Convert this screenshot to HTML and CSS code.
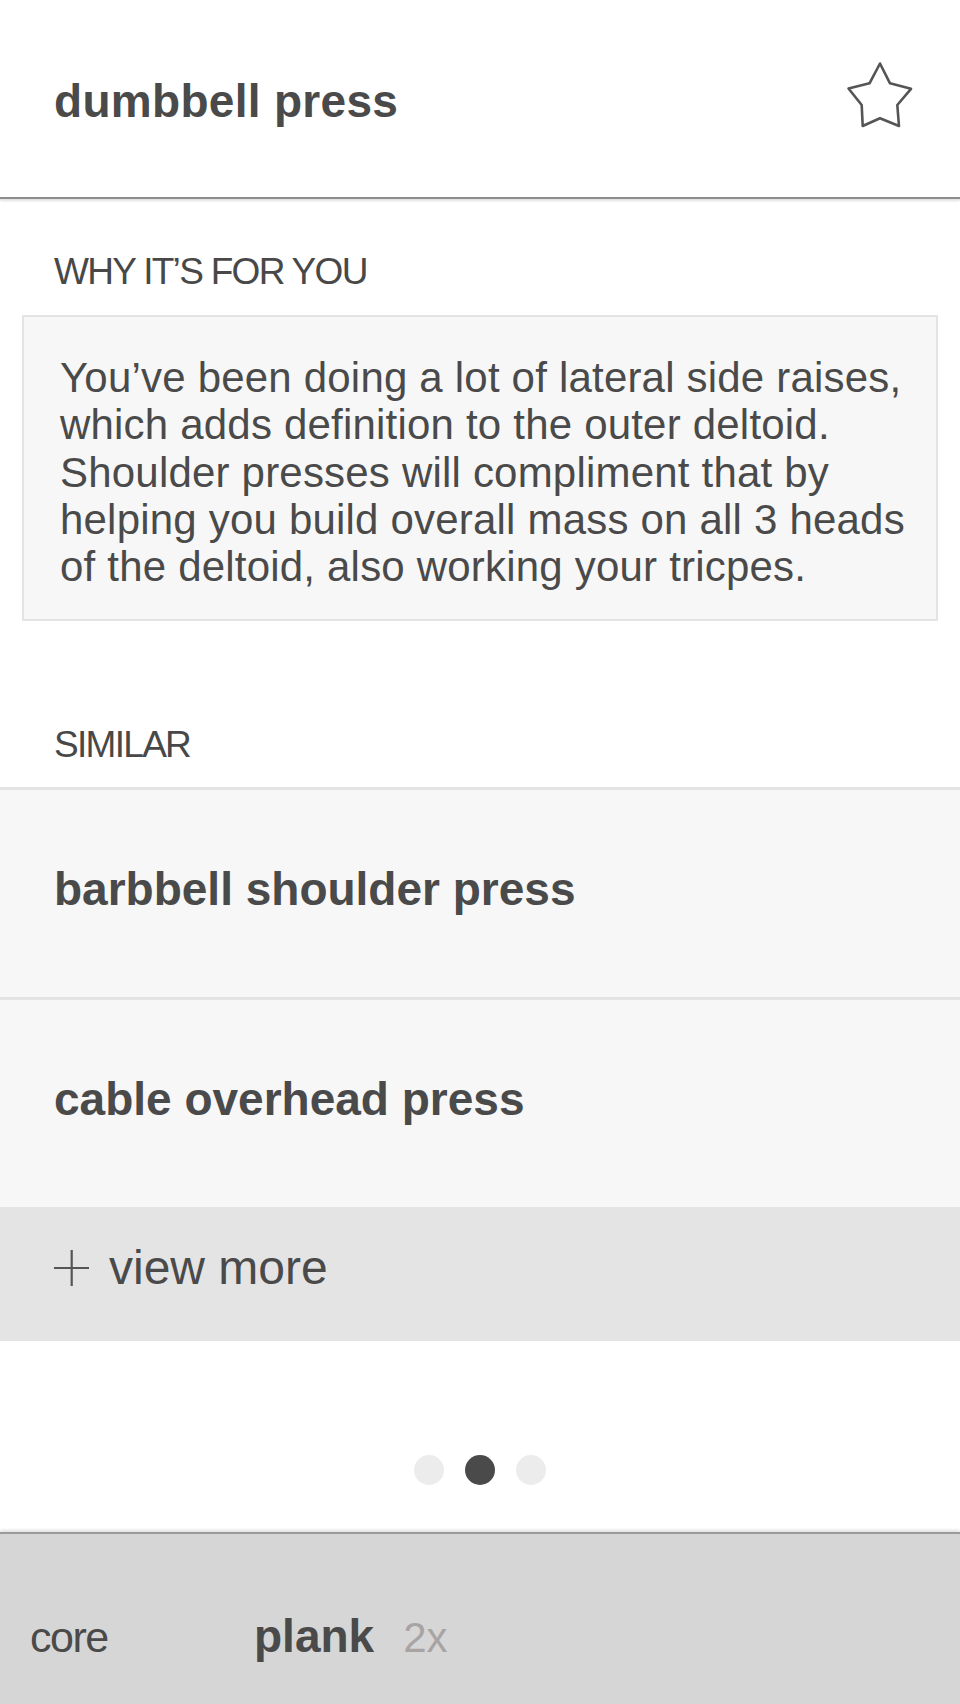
FILE: index.html
```html
<!DOCTYPE html>
<html lang="en">
<head>
<meta charset="utf-8">
<title>dumbbell press</title>
<link rel="stylesheet" href="styles.css">
</head>
<body>
<div class="screen">
  <header class="topbar">
    <h1 class="title">dumbbell press</h1>
    <svg class="star" width="68" height="68" viewBox="-2 -2 68 68" aria-hidden="true">
      <path d="M32 0.5 L42 20.3 L63 25.8 L49.3 42 L51 63 L32 55.3 L14.7 63 L13.7 42 L0.5 25.5 L21.5 20.3 Z" fill="none" stroke="#555" stroke-width="2.6" stroke-linejoin="round"/>
    </svg>
  </header>

  <section class="why">
    <h2 class="label">WHY IT’S FOR YOU</h2>
    <div class="reason">
      You’ve been doing a lot of lateral side raises,<br>
      which adds definition to the outer deltoid.<br>
      Shoulder presses will compliment that by<br>
      helping you build overall mass on all 3 heads<br>
      of the deltoid, also working your tricpes.
    </div>
  </section>

  <section class="similar">
    <h2 class="label label-similar">SIMILAR</h2>
    <ul class="list">
      <li class="row">barbbell shoulder press</li>
      <li class="row">cable overhead press</li>
    </ul>
    <div class="more">
      <svg class="plus" width="36" height="36" viewBox="0 0 36 36" aria-hidden="true">
        <path d="M0 18 H35 M17.7 0 V36" stroke="#555" stroke-width="2.2" fill="none"/>
      </svg>
      <span class="more-text">view more</span>
    </div>
  </section>

  <div class="dots">
    <span class="dot"></span>
    <span class="dot dot-active"></span>
    <span class="dot"></span>
  </div>

  <footer class="bottombar">
    <span class="cat">core</span>
    <span class="ex">plank</span>
    <span class="reps">2x</span>
  </footer>
</div>
</body>
</html>
```

FILE: styles.css
```css
* {
  box-sizing: border-box;
}

html, body {
  margin: 0;
  padding: 0;
  background: #ffffff;
}

body {
  font-family: "Liberation Sans", Arial, Helvetica, sans-serif;
  color: #4a4a4a;
}

.screen {
  width: 960px;
  height: 1704px;
  display: flex;
  flex-direction: column;
  overflow: hidden;
}

/* Header */
.topbar {
  height: 199px;
  display: flex;
  align-items: flex-start;
  justify-content: space-between;
  padding: 61px 46px 0 54px;
  border-bottom: 2px solid #8d8d8d;
  box-shadow: 0 2px 2px rgba(0, 0, 0, 0.12);
  position: relative;
  z-index: 1;
}

.title {
  margin: 17px 0 0;
  font-size: 46px;
  line-height: 46px;
  font-weight: 700;
  letter-spacing: 0.3px;
  color: #4a4a4a;
}

.star {
  display: block;
}

/* Section labels */
.label {
  margin: 0;
  font-size: 37px;
  line-height: 42px;
  font-weight: 400;
  letter-spacing: -1.7px;
  color: #484848;
  padding-left: 54px;
}

.why .label {
  margin-top: 52px;
}

.reason {
  margin: 22px 22px 0;
  border: 2px solid #e4e4e4;
  background: #f7f7f7;
  padding: 37px 10px 29px 36px;
  font-size: 42px;
  line-height: 47.3px;
  letter-spacing: 0.2px;
  color: #4a4a4a;
  white-space: nowrap;
}

.label-similar {
  margin-top: 103px;
}

.list {
  list-style: none;
  margin: 21px 0 0;
  padding: 0;
}

.row {
  border-top: 3px solid #e3e3e3;
  background: #f7f7f7;
  height: 210px;
  padding: 76px 54px 0;
  font-size: 46px;
  line-height: 46px;
  font-weight: 700;
  color: #4a4a4a;
}

.more {
  height: 134px;
  background: #e4e4e4;
  display: flex;
  align-items: center;
  padding: 37px 0 49px 54px;
  gap: 19px;
}

.plus {
  display: block;
  flex: none;
}

.more-text {
  font-size: 48px;
  line-height: 48px;
  color: #4a4a4a;
}

/* Pager dots */
.dots {
  margin-top: 114px;
  display: flex;
  justify-content: center;
  gap: 21px;
}

.dot {
  width: 30px;
  height: 30px;
  border-radius: 50%;
  background: #ececec;
}

.dot-active {
  background: #4a4a4a;
}

/* Bottom bar */
.bottombar {
  margin-top: 47px;
  flex: 1;
  background: #d6d6d6;
  border-top: 2px solid #9b9b9b;
  box-shadow: 0 -2px 3px rgba(0, 0, 0, 0.12);
  display: flex;
  align-items: baseline;
  padding: 79px 0 0 30px;
}

.cat {
  width: 224px;
  font-size: 43px;
  line-height: 46px;
  letter-spacing: -1.5px;
  color: #4a4a4a;
}

.ex {
  font-size: 46px;
  line-height: 46px;
  font-weight: 700;
  color: #4a4a4a;
}

.reps {
  margin-left: 29px;
  font-size: 42px;
  line-height: 46px;
  color: #a9a4a4;
}
```
